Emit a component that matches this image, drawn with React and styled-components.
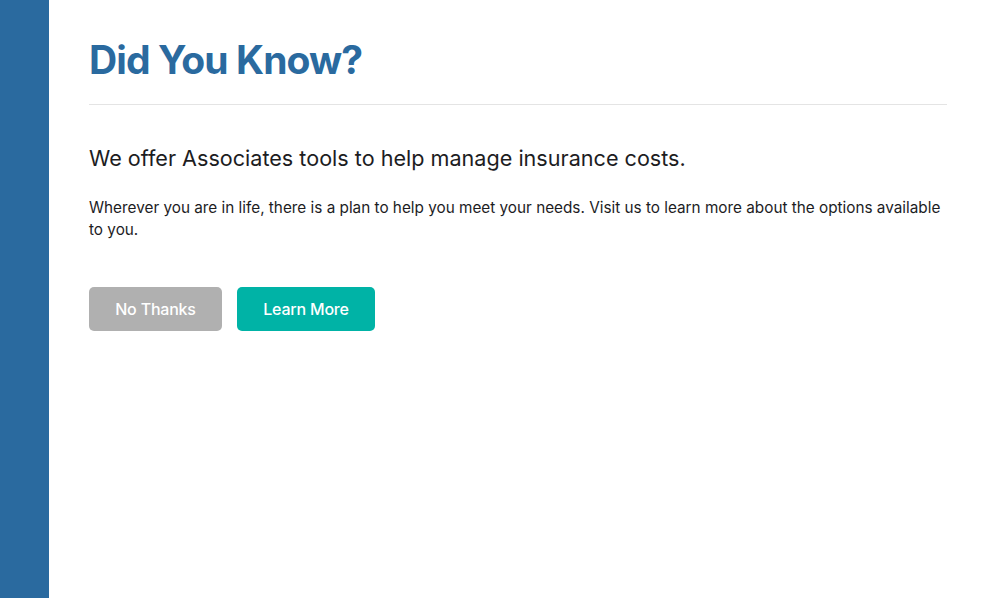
import React from "react";
import styled, { createGlobalStyle } from "styled-components";

const Global = createGlobalStyle`
  html, body { margin: 0; padding: 0; background: #fff; }
  body { font-family: Inter, "Noto Sans", sans-serif; }
`;

const Page = styled.div`
  display: flex;
  min-height: 598px;
`;

const Stripe = styled.div`
  width: 49px;
  flex: none;
  background: #2a6a9f;
`;

const Content = styled.main`
  flex: 1;
  padding: 35px 40px 0 40px;
`;

const Title = styled.h1`
  margin: 0;
  font-size: 39px;
  font-weight: 700;
  letter-spacing: -0.9px;
  color: #2a6a9f;
  line-height: 50px;
  padding-bottom: 19px;
  border-bottom: 1px solid #e4e4e4;
`;

const Subtitle = styled.h2`
  margin: 38px 0 0;
  font-size: 21.6px;
  font-weight: 400;
  color: #1d1d1f;
  line-height: 30px;
`;

const Text = styled.p`
  margin: 24px 0 0;
  font-size: 15.3px;
  line-height: 22px;
  color: #1d1d1f;
`;

const Actions = styled.div`
  display: flex;
  gap: 15px;
  margin-top: 46px;
`;

const Button = styled.button`
  height: 44px;
  width: ${p => p.$w}px;
  border: none;
  border-radius: 5px;
  background: ${p => p.$bg};
  color: #fff;
  font-family: inherit;
  font-size: 16px;
  font-weight: 500;
  letter-spacing: -0.2px;
  cursor: pointer;
`;

export default function App() {
  return (
    <>
      <Global />
      <Page>
        <Stripe />
        <Content>
          <Title>Did You Know?</Title>
          <Subtitle>We offer Associates tools to help manage insurance costs.</Subtitle>
          <Text>
            Wherever you are in life, there is a plan to help you meet your needs. Visit us to learn more about the options available to you.
          </Text>
          <Actions>
            <Button $w={133} $bg="#b0b0b0">No Thanks</Button>
            <Button $w={138} $bg="#00b3a6">Learn More</Button>
          </Actions>
        </Content>
      </Page>
    </>
  );
}
